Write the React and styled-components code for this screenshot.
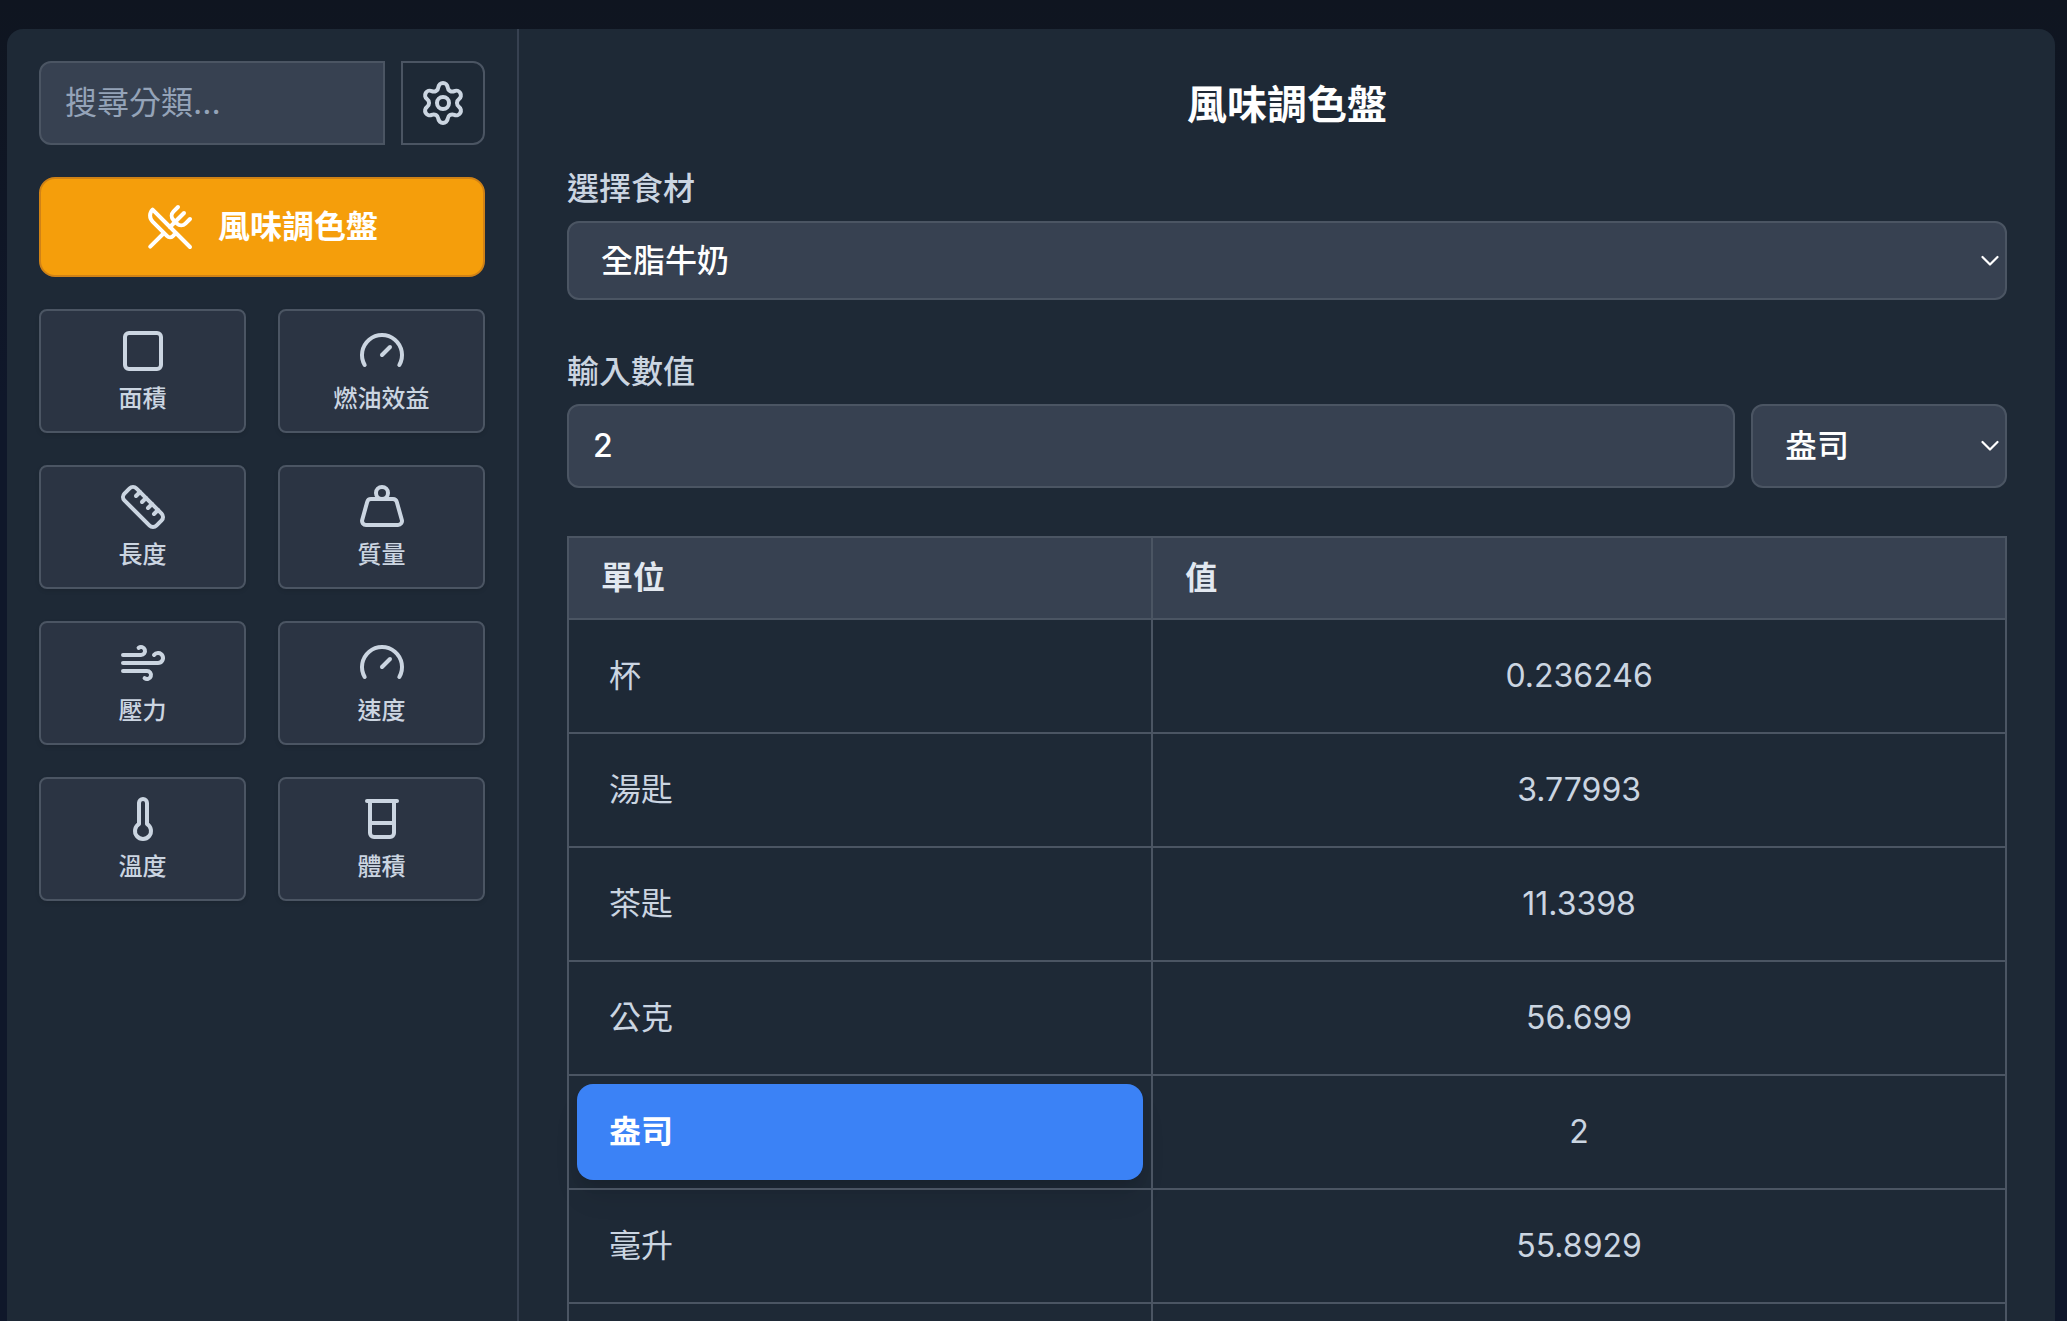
import React, { useState } from "react";
import styled, { createGlobalStyle, css } from "styled-components";
import {
  Beaker,
  Gauge,
  Ruler,
  Settings,
  Square,
  Thermometer,
  UtensilsCrossed,
  Weight,
  Wind,
} from "lucide-react";

const color = {
  page: "#0f172a",
  panel: "#1e2936",
  tile: "#2b3443",
  field: "#374151",
  line: "#4b5563",
  text: "#cbd5e1",
  heading: "#e2e8f0",
  muted: "#94a3b8",
  white: "#ffffff",
  accent: "#f59e0b",
  accentLine: "#d08216",
  active: "#3b82f6",
};

const GlobalStyle = createGlobalStyle`
  *, *::before, *::after { box-sizing: border-box; }
  body {
    margin: 0;
    overflow: hidden;
    background: ${color.page};
    color: ${color.text};
    font-family: Inter, "Noto Sans CJK TC", sans-serif;
    font-size: 32px;
    line-height: 48px;
  }
  button, input, select { margin: 0; font: inherit; color: inherit; }
`;

const Page = styled.div`
  display: flex;
  height: 100vh;
  padding: 29px 12px 0 7px;
  background: linear-gradient(#0f1520, ${color.page} 400px);
`;

const Panel = styled.div`
  flex: 1;
  display: flex;
  min-width: 0;
  overflow: hidden;
  border-radius: 16px 16px 0 0;
  background: ${color.panel};
`;

const Sidebar = styled.aside`
  flex: none;
  display: flex;
  flex-direction: column;
  gap: 32px;
  width: 512px;
  padding: 32px;
  border-right: 2px solid ${color.field};
`;

const SearchRow = styled.div`
  display: flex;
  gap: 16px;
`;

const fieldBox = css`
  border: 2px solid ${color.line};
  border-radius: 12px;
  background: ${color.field};
  color: ${color.white};
  outline: none;
`;

const TextField = styled.input`
  ${fieldBox}
  flex: 1;
  min-width: 0;
  height: 84px;
  padding: 0 24px 2px;
  font-weight: 500;
`;

const SearchField = styled(TextField)`
  border-radius: 12px 0 0 12px;
  font-weight: 400;
  &::placeholder { color: ${color.muted}; opacity: 1; }
`;

const IconButton = styled.button`
  display: flex;
  align-items: center;
  justify-content: center;
  width: 84px;
  height: 84px;
  padding: 0;
  border: 2px solid ${color.line};
  border-radius: 0 12px 12px 0;
  background: transparent;
`;

const FlavorButton = styled.button`
  display: flex;
  align-items: center;
  justify-content: center;
  gap: 24px;
  padding: 24px;
  border: 2px solid ${color.accentLine};
  border-radius: 16px;
  background: ${color.accent};
  color: ${color.white};
  font-weight: 700;
`;

const CategoryGrid = styled.nav`
  display: grid;
  grid-template-columns: 1fr 1fr;
  gap: 32px;
`;

const CategoryButton = styled.button`
  display: flex;
  flex-direction: column;
  align-items: center;
  gap: 8px;
  padding: 16px;
  border: 2px solid ${color.line};
  border-radius: 8px;
  background: ${color.tile};
  box-shadow: 0 2px 4px rgba(0, 0, 0, 0.1);
  font-size: 24px;
  font-weight: 500;
  line-height: 32px;
`;

const Main = styled.main`
  flex: 1;
  display: flex;
  flex-direction: column;
  gap: 48px;
  min-width: 0;
  padding: 48px;
`;

const Title = styled.h1`
  margin: 0 0 -16px;
  color: ${color.white};
  font-size: 40px;
  font-weight: 700;
  line-height: 56px;
  text-align: center;
`;

const Field = styled.div`
  display: flex;
  flex-direction: column;
  gap: 8px;
`;

const Label = styled.label`
  font-weight: 500;
`;

const FieldRow = styled.div`
  display: flex;
  gap: 16px;
`;

const SelectWrap = styled.div`
  position: relative;
  width: ${(p) => p.$width || "100%"};
`;

const SelectBox = styled.select`
  ${fieldBox}
  display: block;
  width: 100%;
  height: ${(p) => p.$height};
  padding: 0 32px;
  appearance: none;
  font-weight: 500;
`;

const Chevron = styled.svg`
  position: absolute;
  top: 50%;
  right: 8px;
  width: 18px;
  height: 12px;
  margin-top: -6px;
  fill: none;
  stroke: ${color.white};
  stroke-width: 2.2;
  stroke-linecap: round;
  stroke-linejoin: round;
  pointer-events: none;
`;

const Table = styled.table`
  width: 100%;
  table-layout: fixed;
  border-collapse: collapse;
`;

const HeadCell = styled.th`
  width: ${(p) => p.$width || "auto"};
  padding: 16px 32px;
  border: 2px solid ${color.line};
  background: ${color.field};
  color: ${color.heading};
  font-weight: 700;
  text-align: left;
`;

const Cell = styled.td`
  padding: 8px;
  border: 2px solid ${color.line};
  text-align: ${(p) => p.$align || "left"};
`;

const UnitName = styled.div`
  min-height: 96px;
  padding: 24px 32px;
  border-radius: 16px;
  font-weight: ${(p) => (p.$active ? 700 : 400)};
  color: ${(p) => (p.$active ? color.white : color.text)};
  background: ${(p) => (p.$active ? color.active : "transparent")};
  box-shadow: ${(p) =>
    p.$active
      ? "0 20px 30px -6px rgba(0, 0, 0, 0.1), 0 8px 12px -4px rgba(0, 0, 0, 0.1)"
      : "none"};
`;

const categories = [
  ["面積", Square],
  ["燃油效益", Gauge],
  ["長度", Ruler],
  ["質量", Weight],
  ["壓力", Wind],
  ["速度", Gauge],
  ["溫度", Thermometer],
  ["體積", Beaker],
];

const rows = [
  ["杯", "0.236246"],
  ["湯匙", "3.77993"],
  ["茶匙", "11.3398"],
  ["公克", "56.699"],
  ["盎司", "2"],
  ["毫升", "55.8929"],
  ["", ""],
];

function Select({ id, value, width, height, label }) {
  return (
    <SelectWrap $width={width}>
      <SelectBox id={id} $height={height} aria-label={label} defaultValue={value}>
        <option>{value}</option>
      </SelectBox>
      <Chevron viewBox="0 0 18 12" aria-hidden="true">
        <path d="M1.5 2 9 9.5 16.5 2" />
      </Chevron>
    </SelectWrap>
  );
}

export default function App() {
  const [amount, setAmount] = useState("2");
  return (
    <>
      <GlobalStyle />
      <Page>
        <Panel>
          <Sidebar>
            <SearchRow>
              <SearchField type="text" placeholder="搜尋分類..." aria-label="搜尋分類" />
              <IconButton type="button" aria-label="設定">
                <Settings size={48} />
              </IconButton>
            </SearchRow>
            <FlavorButton type="button">
              <UtensilsCrossed size={48} />
              <span>風味調色盤</span>
            </FlavorButton>
            <CategoryGrid>
              {categories.map(([name, Icon]) => (
                <CategoryButton type="button" key={name}>
                  <Icon size={48} />
                  <span>{name}</span>
                </CategoryButton>
              ))}
            </CategoryGrid>
          </Sidebar>
          <Main>
            <Title>風味調色盤</Title>
            <Field>
              <Label htmlFor="ingredient">選擇食材</Label>
              <Select id="ingredient" value="全脂牛奶" height="79px" />
            </Field>
            <Field>
              <Label htmlFor="amount">輸入數值</Label>
              <FieldRow>
                <TextField
                  id="amount"
                  type="text"
                  inputMode="decimal"
                  value={amount}
                  onChange={(e) => setAmount(e.target.value)}
                />
                <Select id="unit" value="盎司" width="256px" height="84px" label="單位" />
              </FieldRow>
            </Field>
            <Table>
              <thead>
                <tr>
                  <HeadCell $width="calc(100% * 13 / 32)">單位</HeadCell>
                  <HeadCell>值</HeadCell>
                </tr>
              </thead>
              <tbody>
                {rows.map(([unit, value], i) => (
                  <tr key={i}>
                    <Cell>
                      <UnitName $active={unit === "盎司"}>{unit}</UnitName>
                    </Cell>
                    <Cell $align="center">{value}</Cell>
                  </tr>
                ))}
              </tbody>
            </Table>
          </Main>
        </Panel>
      </Page>
    </>
  );
}
